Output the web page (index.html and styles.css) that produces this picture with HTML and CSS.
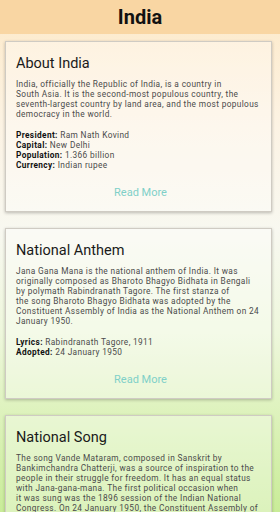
FILE: index.html
```html
<!DOCTYPE html>
<html lang="en">

<head>
    <meta charset="UTF-8">
    <meta name="viewport" content="width=device-width, initial-scale=1.0">
    <title>India</title>
    <link rel="stylesheet" href="styles.css">
</head>

<body>

    <header class="app-bar">
        <h1>India</h1>
    </header>

    <main class="content">
        <section class="card">
            <h2>About India</h2>
            <p>India, officially the Republic of India, is a country in<br>South Asia. It is the second-most populous country, the<br>seventh-largest country by land area, and the most populous<br>democracy in the world.</p>
            <ul class="facts">
                <li><b>President:</b> Ram Nath Kovind</li>
                <li><b>Capital:</b> New Delhi</li>
                <li><b>Population:</b> 1.366 billion</li>
                <li><b>Currency:</b> Indian rupee</li>
            </ul>
            <button class="read-more">Read More</button>
        </section>

        <section class="card">
            <h2>National Anthem</h2>
            <p>Jana Gana Mana is the national anthem of India. It was<br>originally composed as Bharoto Bhagyo Bidhata in Bengali<br>by polymath Rabindranath Tagore. The first stanza of<br>the song Bharoto Bhagyo Bidhata was adopted by the<br>Constituent Assembly of India as the National Anthem on 24<br>January 1950.</p>
            <ul class="facts">
                <li><b>Lyrics:</b> Rabindranath Tagore, 1911</li>
                <li><b>Adopted:</b> 24 January 1950</li>
            </ul>
            <button class="read-more">Read More</button>
        </section>

        <section class="card">
            <h2>National Song</h2>
            <p>The song Vande Mataram, composed in Sanskrit by<br>Bankimchandra Chatterji, was a source of inspiration to the<br>people in their struggle for freedom. It has an equal status<br>with Jana-gana-mana. The first political occasion when<br>it was sung was the 1896 session of the Indian National<br>Congress. On 24 January 1950, the Constituent Assembly of<br>India adopted it as the National Song.</p>
        </section>
    </main>

</body>

</html>
```

FILE: styles.css
```css
html, body {
    margin: 0;
    height: 100%;
    overflow: hidden;
}

body {
    font-family: Roboto, "Noto Sans", sans-serif;
    background: linear-gradient(180deg, #fde9c8 0%, #fcf3e4 25%, #f8f8f0 45%, #eef7dc 65%, #d9f1b4 85%, #c9ec98 100%);
    color: #444;
}

.app-bar {
    height: 34px;
    background-color: #f9d6a3;
    display: flex;
    align-items: center;
    justify-content: center;
}

.app-bar h1 {
    margin: 0;
    font-size: 20px;
    font-weight: bold;
    color: #111;
}

.content {
    padding: 7px 8px 0 5px;
    display: flex;
    flex-direction: column;
    gap: 16px;
}

.card {
    border: 1px solid #cfcbc3;
    box-shadow: 0 1px 3px rgba(0, 0, 0, 0.25);
    background-color: rgba(255, 255, 255, 0.35);
    padding: 13px 6px 12px 10px;
}

.card h2 {
    margin: 0 0 7px 0;
    font-size: 14.5px;
    line-height: 17px;
    font-weight: normal;
    color: #1a1a1a;
}

.card p {
    margin: 0;
    font-size: 8.3px;
    line-height: 10px;
    letter-spacing: 0.36px;
    color: #4a4a4a;
}

.facts {
    list-style: none;
    margin: 11px 0 0 0;
    padding: 0;
    font-size: 8.3px;
    line-height: 10px;
    letter-spacing: 0.36px;
    color: #4a4a4a;
}

.facts b {
    color: #111;
}

.read-more {
    display: block;
    margin: 16px auto 0 auto;
    background: none;
    border: none;
    padding: 0;
    font-family: Roboto, sans-serif;
    font-size: 11px;
    line-height: 13px;
    color: #7fd0c8;
    cursor: pointer;
}
```
